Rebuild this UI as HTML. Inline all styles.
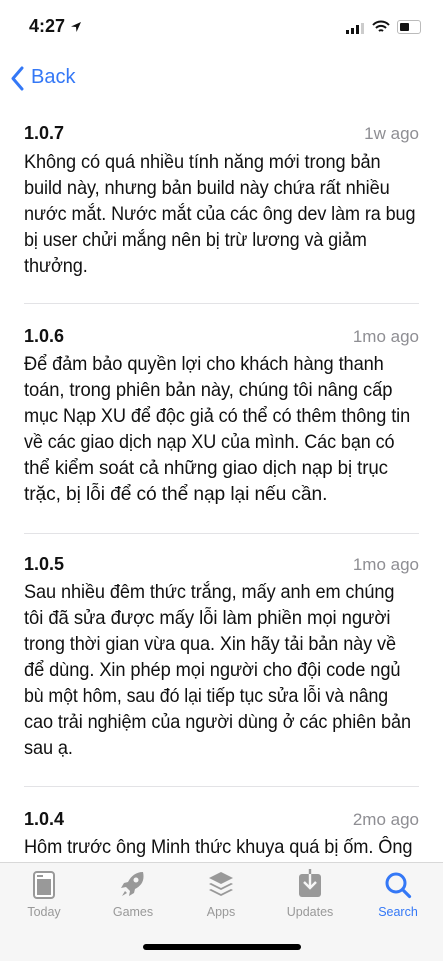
<!DOCTYPE html>
<html><head><meta charset="utf-8"><style>
body{margin:0;width:443px;height:960px;background:#fff;position:relative;overflow:hidden;font-family:"Liberation Sans",sans-serif;color:#111}
.a{position:absolute;white-space:nowrap}
.v{left:24px;font-size:18px;font-weight:bold}
.d{right:24px;font-size:17px;color:#8e8e93}
.l{left:24px;font-size:19.2px;letter-spacing:-0.1px;transform-origin:0 0}
.sep{position:absolute;left:24px;right:24px;height:1px;background:#e3e3e6}
.tab{position:absolute;left:0;top:862px;width:443px;height:98px;background:#f6f6f6;border-top:1px solid #d8d8d8}
.t{position:absolute;top:42px;font-size:12.5px;color:#999;width:80px;text-align:center}
</style></head><body>
<div class="a" style="left:29px;top:16px;font-size:18px;font-weight:bold">4:27</div>
<svg class="a" style="left:70px;top:21px" width="12" height="12" viewBox="0 0 12 12"><path d="M11 1L1 5.5l5 .5.5 5z" fill="#111"/></svg>
<svg class="a" style="left:346px;top:23px" width="20" height="11"><rect x="0" y="7" width="3" height="4" fill="#111"/><rect x="5" y="5" width="3" height="6" fill="#111"/><rect x="10" y="2" width="3" height="9" fill="#111"/><rect x="15" y="0" width="3" height="11" fill="#ccc"/></svg>
<svg class="a" style="left:372px;top:20px" width="18" height="14" viewBox="0 0 18 14"><path d="M1 5a11 11 0 0 1 16 0M4 8a7 7 0 0 1 10 0M7 11a3 3 0 0 1 4 0" stroke="#111" stroke-width="2" fill="none"/></svg>
<div class="a" style="left:397px;top:20px;width:22px;height:12px;border:1px solid #bbb;border-radius:3px"><div style="margin:2px;width:9px;height:8px;background:#111;border-radius:1px"></div></div>
<svg class="a" style="left:10px;top:66px" width="14" height="25"><path d="M12 2L3 12.5 12 23" stroke="#3478f6" stroke-width="3" fill="none" stroke-linecap="round" stroke-linejoin="round"/></svg>
<div class="a" style="left:31px;top:66px;font-size:20px;color:#3478f6">Back</div>

<div class="a v" style="top:123px">1.0.7</div><div class="a d" style="top:124px">1w ago</div>
<div class="a l" style="top:152px;transform:scaleX(0.947)">Không có quá nhiều tính năng mới trong bản</div>
<div class="a l" style="top:178px;transform:scaleX(0.948)">build này, nhưng bản build này chứa rất nhiều</div>
<div class="a l" style="top:204px;transform:scaleX(0.94)">nước mắt. Nước mắt của các ông dev làm ra bug</div>
<div class="a l" style="top:230px;transform:scaleX(0.937)">bị user chửi mắng nên bị trừ lương và giảm</div>
<div class="a l" style="top:256px;transform:scaleX(0.945)">thưởng.</div>
<div class="sep" style="top:303px"></div>

<div class="a v" style="top:326px">1.0.6</div><div class="a d" style="top:327px">1mo ago</div>
<div class="a l" style="top:354px;transform:scaleX(0.95)">Để đảm bảo quyền lợi cho khách hàng thanh</div>
<div class="a l" style="top:380px;transform:scaleX(0.958)">toán, trong phiên bản này, chúng tôi nâng cấp</div>
<div class="a l" style="top:406px;transform:scaleX(0.946)">mục Nạp XU để độc giả có thể có thêm thông tin</div>
<div class="a l" style="top:432px;transform:scaleX(0.939)">về các giao dịch nạp XU của mình. Các bạn có</div>
<div class="a l" style="top:458px;transform:scaleX(0.975)">thể kiểm soát cả những giao dịch nạp bị trục</div>
<div class="a l" style="top:484px;transform:scaleX(1.0)">trặc, bị lỗi để có thể nạp lại nếu cần.</div>
<div class="sep" style="top:533px"></div>

<div class="a v" style="top:554px">1.0.5</div><div class="a d" style="top:555px">1mo ago</div>
<div class="a l" style="top:582px;transform:scaleX(0.946)">Sau nhiều đêm thức trắng, mấy anh em chúng</div>
<div class="a l" style="top:608px;transform:scaleX(0.966)">tôi đã sửa được mấy lỗi làm phiền mọi người</div>
<div class="a l" style="top:634px;transform:scaleX(0.944)">trong thời gian vừa qua. Xin hãy tải bản này về</div>
<div class="a l" style="top:660px;transform:scaleX(0.952)">để dùng. Xin phép mọi người cho đội code ngủ</div>
<div class="a l" style="top:686px;transform:scaleX(0.926)">bù một hôm, sau đó lại tiếp tục sửa lỗi và nâng</div>
<div class="a l" style="top:712px;transform:scaleX(0.944)">cao trải nghiệm của người dùng ở các phiên bản</div>
<div class="a l" style="top:738px;transform:scaleX(0.945)">sau ạ.</div>
<div class="sep" style="top:786px"></div>

<div class="a v" style="top:809px">1.0.4</div><div class="a d" style="top:810px">2mo ago</div>
<div class="a l" style="top:837px;transform:scaleX(0.949)">Hôm trước ông Minh thức khuya quá bị ốm. Ông</div>

<div class="tab">
<svg class="a" style="left:33px;top:8px" width="22" height="28"><rect x="1" y="1" width="20" height="26" rx="3" fill="#fff" stroke="#999" stroke-width="2"/><rect x="4" y="8" width="14" height="16" fill="#999"/><rect x="4" y="4" width="6" height="2" fill="#999"/></svg>
<svg class="a" style="left:119px;top:8px" width="26" height="27" viewBox="0 0 26 27"><path d="M24 1c-7 0-12 4-15 10l-4 1-3 5 5-1 4 4-1 5 5-3 1-4c6-3 10-8 8-17zM6 20l-3 5 5-3" fill="#999"/><circle cx="17" cy="9" r="2.5" fill="#f6f6f6"/></svg>
<svg class="a" style="left:208px;top:8px" width="26" height="26" viewBox="0 0 26 26"><path d="M13 1L1 7l12 6 12-6z" fill="#999"/><path d="M3 12l10 5 10-5 2 1-12 6-12-6z" fill="#999"/><path d="M3 18l10 5 10-5 2 1-12 6-12-6z" fill="#999"/></svg>
<svg class="a" style="left:298px;top:6px" width="24" height="29" viewBox="0 0 24 29"><rect x="1" y="5" width="22" height="23" rx="3" fill="#999"/><path d="M12 0v18M6 13l6 6 6-6" stroke="#f6f6f6" stroke-width="2.4" fill="none"/><path d="M12 0v5" stroke="#999" stroke-width="2.4"/></svg>
<svg class="a" style="left:384px;top:8px" width="28" height="28" viewBox="0 0 28 28"><circle cx="12" cy="12" r="9" stroke="#3478f6" stroke-width="3" fill="none"/><path d="M18.5 18.5l7 7" stroke="#3478f6" stroke-width="3.2" stroke-linecap="round"/></svg>
<div class="t" style="left:4px">Today</div>
<div class="t" style="left:93px">Games</div>
<div class="t" style="left:181px">Apps</div>
<div class="t" style="left:270px">Updates</div>
<div class="t" style="left:358px;color:#3478f6">Search</div>
<div class="a" style="left:143px;top:81px;width:158px;height:6px;background:#000;border-radius:3px"></div>
</div>
</body></html>
